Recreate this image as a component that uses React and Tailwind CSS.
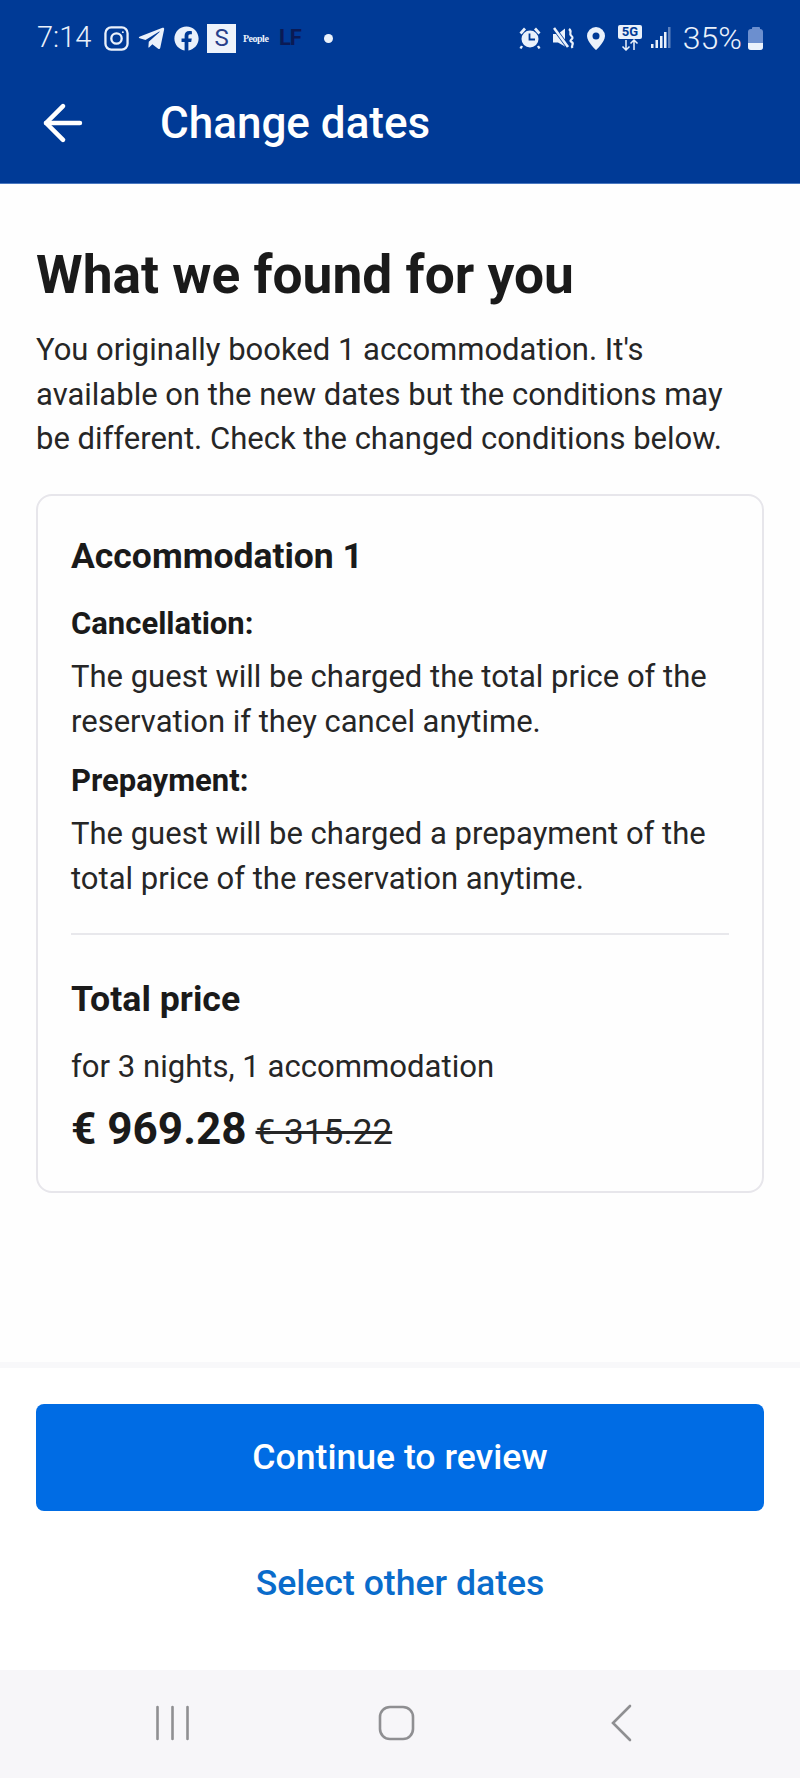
import React from 'react';
import { ArrowLeft } from 'lucide-react';
import { FaFacebook, FaTelegramPlane } from 'react-icons/fa';

function AlarmIcon() {
  return (
    <svg width="22" height="24" viewBox="0 0 22 24" fill="currentColor">
      <circle cx="11" cy="13" r="8.500" />
      <path d="M0.500 6.500L5 1.500 7 3.500 2.500 8.500zM21.500 6.500L17 1.500 15 3.500 19.500 8.500z" />
      <path d="M3 20l-1.500 2.500M19 20l1.500 2.500" stroke="currentColor" strokeWidth="2.400" />
      <path d="M10.500 7.500V13.500H16" fill="none" stroke="#003a96" strokeWidth="1.800" />
    </svg>
  );
}

function MuteIcon() {
  return (
    <svg width="22" height="22" viewBox="0 0 22 22" fill="none">
      <path d="M0 7h5l7-5.500v18L5 15.500H0z" fill="currentColor" />
      <path d="M1 1l14 19" stroke="#003a96" strokeWidth="4" />
      <path d="M1 1l14 19" stroke="currentColor" strokeWidth="2.600" />
      <path d="M16 2c4 3-1 4 2.500 7S15 13 18.500 15s-1 3 1 6" stroke="currentColor" strokeWidth="2.200" />
    </svg>
  );
}

function PinIcon() {
  return (
    <svg width="18" height="23" viewBox="0 0 18 23" fill="currentColor">
      <path d="M9 0a9 9 0 0 1 9 9c0 6-9 14-9 14S0 15 0 9a9 9 0 0 1 9-9z" />
      <circle cx="9" cy="9" r="3.500" fill="#003a96" />
    </svg>
  );
}

function StatusBar() {
  return (
    <div className="flex h-[75px] items-center justify-between pl-[37px] pr-[37px] pt-[1px] text-[#eaf1fb]">
      <div className="flex items-center">
        <span className="w-[67px] text-[29px] font-light">7:14</span>
        <svg width="25" height="25" viewBox="0 0 26 26" fill="none" stroke="currentColor" strokeWidth="2.400">
          <rect x="1.500" y="1.500" width="23" height="23" rx="6" />
          <circle cx="13" cy="13" r="5.400" />
          <circle cx="19.600" cy="6.400" r="1" fill="currentColor" stroke="none" />
        </svg>
        <FaTelegramPlane size={29} className="ml-[8px]" />
        <FaFacebook size={25} className="ml-[8px]" />
        <span className="ml-[8px] flex h-[29px] w-[29px] items-center justify-center bg-[#eef3fb] text-[24px] font-normal text-[#27408b]">S</span>
        <span className="ml-[7px] w-[26px] text-[10px] font-bold tracking-tighter font-['Liberation_Serif',serif]">People</span>
        <span className="ml-[10px] w-[24px] text-[22px] font-bold leading-none tracking-tighter text-[#0a1a55]">LF</span>
        <span className="ml-[21px] h-[9px] w-[9px] rounded-full bg-[#eaf1fb]" />
      </div>
      <div className="flex items-center">
        <AlarmIcon />
        <span className="ml-[12px] flex"><MuteIcon /></span>
        <span className="ml-[12px] flex"><PinIcon /></span>
        <div className="ml-[13px] flex w-[24px] flex-col items-center">
          <span className="w-full rounded-[2px] bg-[#eaf1fb] text-center text-[13px] font-bold leading-[14px] text-[#003a96]">5G</span>
          <svg width="18" height="12" viewBox="0 0 18 12" fill="none" stroke="currentColor" strokeWidth="1.500">
            <path d="M5 1v10M1.500 7.500L5 11l3.500-3.500M13 11V1M9.500 4.500L13 1l3.500 3.500" />
          </svg>
        </div>
        <svg width="20" height="22" viewBox="0 0 20 22" className="ml-[9px]" fill="currentColor">
          <rect x="0" y="17" width="2.500" height="4" />
          <rect x="4.500" y="13" width="2.500" height="8" />
          <rect x="9" y="9" width="2.500" height="12" />
          <rect x="13" y="5" width="2.500" height="16" />
          <rect x="17" y="0" width="2.500" height="21" opacity="0.4" />
        </svg>
        <span className="ml-[12px] text-[32px] font-light leading-none">35%</span>
        <div className="ml-[6px] flex w-[15px] flex-col items-center">
          <div className="h-[2px] w-[8px] rounded-t-[1px] bg-[#6c8fcf]" />
          <div className="flex h-[21px] w-full flex-col overflow-hidden rounded-[3px] bg-[#6c8fcf]">
            <div className="h-[14px]" />
            <div className="flex-1 bg-[#eaf1fb]" />
          </div>
        </div>
      </div>
    </div>
  );
}

function Section({ title, body }) {
  return (
    <div>
      <h3 className="text-[31px] font-bold leading-[38px] text-[#1a1a1a]">{title}</h3>
      <p className="mt-[11px] text-[31px] leading-[45px] text-[#262626]">{body}</p>
    </div>
  );
}

export default function App() {
  return (
    <div className="flex h-[1778px] w-[800px] flex-col overflow-hidden bg-white font-['Roboto',sans-serif]">
      <header className="h-[184px] shrink-0 border-b border-[#4a78c0] bg-[#003a96]">
        <StatusBar />
        <div className="flex h-[108px] items-center pb-[12px]">
          <ArrowLeft size={58} strokeWidth={1.900} className="ml-[34px] text-white" />
          <h1 className="ml-[68px] text-[44px] font-medium text-white">Change dates</h1>
        </div>
      </header>

      <main className="flex-1 bg-[#fefefe] px-[36px] pt-[56px]">
        <h2 className="text-[53.3px] font-bold leading-[70px] text-[#1a1a1a]">What we found for you</h2>
        <p className="mt-[18px] text-[31px] leading-[44.7px] text-[#262626]">
          You originally booked 1 accommodation. It's available on the new dates but the conditions may be different. Check the changed conditions below.
        </p>

        <section className="mt-[32px] h-[699px] rounded-[16px] border-2 border-[#e7e6eb] px-[33px] pt-[36px]">
          <h3 className="text-[35.5px] font-bold leading-[48px] text-[#1a1a1a]">Accommodation 1</h3>
          <div className="mt-[25px] flex flex-col gap-[18px]">
            <Section title="Cancellation:" body="The guest will be charged the total price of the reservation if they cancel anytime." />
            <Section title="Prepayment:" body="The guest will be charged a prepayment of the total price of the reservation anytime." />
          </div>
          <div className="mt-[32px] h-[2px] bg-[#e8e8ec]" />
          <h3 className="mt-[40px] text-[35.7px] font-bold leading-[48px] text-[#1a1a1a]">Total price</h3>
          <p className="mt-[21px] text-[31.1px] leading-[45px] text-[#262626]">for 3 nights, 1 accommodation</p>
          <div className="mt-[9px] flex items-baseline gap-[9px]">
            <span className="text-[44.100px] font-bold leading-[62px] text-[#1a1a1a]">€ 969.28</span>
            <span className="text-[35.2px] leading-[48px] text-[#262626] line-through">€ 315.22</span>
          </div>
        </section>
      </main>

      <div className="h-[6px] shrink-0 bg-[#f8f8fa]" />
      <footer className="flex h-[302px] shrink-0 flex-col items-center bg-white px-[36px] pt-[36px]">
        <button className="h-[107px] w-full rounded-[8px] bg-[#006ce4] text-[35.6px] font-medium text-white">Continue to review</button>
        <button className="mt-[48px] text-[35.6px] font-medium leading-[48px] text-[#0a6ccb]">Select other dates</button>
      </footer>

      <nav className="flex h-[108px] shrink-0 items-center bg-[#f7f6f9] pb-[2px]">
        <svg width="800" height="40" viewBox="0 0 800 40" fill="none" stroke="#8f8f92" strokeWidth="2.600" strokeLinecap="round">
          <path d="M157.500 4v32M172.500 4v32M187.500 4v32" />
          <rect x="380" y="4" width="33" height="32" rx="10" />
          <path d="M630 3L613 20l17 17" />
        </svg>
      </nav>
    </div>
  );
}
